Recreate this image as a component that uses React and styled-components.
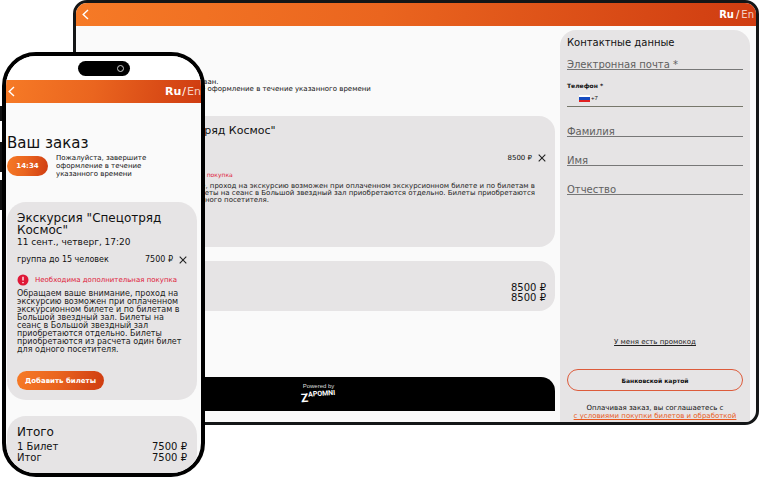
import React from "react";
import styled, { createGlobalStyle } from "styled-components";

const GlobalStyle = createGlobalStyle`
  *, *::before, *::after { box-sizing: border-box; }
  html { background: #fff; }
  body { margin: 0; overflow: hidden; font-family: "DejaVu Sans", "Noto Sans", sans-serif; color: #111; }
  button, input { font-family: inherit; color: inherit; }
  h1, h2, h3, p { margin: 0; font-weight: 400; }
`;

const flame = "linear-gradient(100deg, #f67a26 0%, #ea651f 45%, #cf3c11 100%)";

const Stage = styled.main`
  position: relative;
  padding: 0 1px 53px 73px;
`;

const Tablet = styled.section`
  display: flex;
  flex-direction: column;
  min-height: 425px;
  border: 3px solid #141617;
  border-radius: 14px;
  background: #fafafa;
  overflow: hidden;
`;

const TopBar = styled.header`
  display: flex;
  align-items: center;
  justify-content: space-between;
  flex: none;
  height: 23px;
  padding: 0 ${(p) => (p.$phone ? 0 : 2)}px 0 ${(p) => (p.$phone ? 2 : 6)}px;
  background: ${flame};
  color: #fff;
`;

const IconButton = styled.button`
  display: flex;
  flex: none;
  padding: 0;
  border: 0;
  background: none;
  cursor: pointer;
`;

const Languages = styled.nav`
  display: flex;
  gap: ${(p) => (p.$phone ? 1 : 2)}px;
  font-size: ${(p) => (p.$phone ? 11 : 10)}px;
  line-height: 14px;
`;

const Language = styled.a`
  color: #fff;
  text-decoration: none;
  font-weight: ${(p) => (p.$current ? 700 : 400)};
  opacity: ${(p) => (p.$current ? 1 : 0.75)};
`;

const TabletBody = styled.div`
  display: grid;
  grid-template-columns: minmax(0, 1fr) 190px;
  flex: 1;
  gap: 5px;
  padding: 4px 6px 0 5px;
`;

const OrderColumn = styled.div`
  display: flex;
  flex-direction: column;
  padding-top: 49px;
`;

const Notice = styled.p`
  margin-left: 34px;
  font-size: 7px;
  line-height: 7px;
  white-space: nowrap;
`;

const WideCard = styled.article`
  margin-top: ${(p) => p.$gap}px;
  padding: 8px 9px 0 12px;
  min-height: ${(p) => p.$height}px;
  border-radius: 16px;
  background: #e6e4e5;
`;

const WideTitle = styled.h2`
  font-size: 11px;
  line-height: 14px;
`;

const WidePrice = styled.div`
  display: flex;
  align-items: center;
  justify-content: flex-end;
  gap: 6px;
  margin: 14px 0 5px;
  font-size: 7px;
  line-height: 12px;
`;

const Warning = styled.p`
  display: flex;
  align-items: center;
  gap: 6px;
  font-size: ${(p) => (p.$wide ? 6 : 7)}px;
  line-height: 10px;
  white-space: nowrap;
  color: #df1837;
`;

const WideText = styled.p`
  margin-top: 2px;
  padding-right: 11px;
  font-size: 7px;
  line-height: 7px;
  color: #222;
  text-align: right;
  white-space: pre-line;
`;

const WideTextEnd = styled.span`
  display: block;
  padding-right: 266px;
`;

const Totals = styled.div`
  padding-top: ${(p) => (p.$wide ? 14 : 3)}px;
  font-size: 10px;
  line-height: ${(p) => (p.$wide ? 10 : 11)}px;
`;

const TotalRow = styled.div`
  display: flex;
  justify-content: space-between;
`;

const Powered = styled.footer`
  display: flex;
  flex-direction: column;
  align-items: center;
  margin: 66px 0 10px;
  height: 34px;
  padding: 6px 0 0 1px;
  border-radius: 0 14px 0 0;
  background: #000;
  color: #ddd;
  font: 6px/7px "Liberation Sans", sans-serif;
`;

const Brand = styled.strong`
  display: flex;
  align-items: flex-start;
  color: #fff;
  font: 700 7px/9px Roboto, sans-serif;
  transform: rotate(-4deg);
`;

const BrandInitial = styled.span`
  font-size: 12px;
  line-height: 14px;
`;

const Contacts = styled.form`
  display: flex;
  flex-direction: column;
  padding: 7px 7px 0;
  border-radius: 16px 16px 0 0;
  background: #e6e4e5;
`;

const ContactsTitle = styled.h2`
  font-size: 10px;
  line-height: 12px;
`;

const Field = styled.input`
  width: 100%;
  height: 14px;
  margin-top: ${(p) => p.$gap}px;
  padding: 4px 0 0;
  border: 0;
  border-bottom: 1px solid #777;
  border-radius: 0;
  background: none;
  outline: 0;
  font-size: 10px;
  line-height: 10px;
  &::placeholder { color: #606060; opacity: 1; }
`;

const PhoneLabel = styled.label`
  margin-top: 12px;
  font-size: 6px;
  font-weight: 700;
  line-height: 8px;
`;

const PhoneRow = styled.div`
  display: flex;
  align-items: center;
  gap: 1px;
  height: 17px;
  padding-left: 12px;
  border-bottom: 1px solid #77776b;
`;

const PhoneInput = styled.input`
  flex: 1;
  min-width: 0;
  padding: 0;
  border: 0;
  outline: 0;
  background: none;
  font: 6px/8px "Liberation Sans", sans-serif;
`;

const Promo = styled.a`
  align-self: center;
  margin-top: 142px;
  color: #222;
  font-size: 7px;
  line-height: 10px;
`;

const PayButton = styled.button`
  height: 22px;
  margin-top: 22px;
  padding: 0;
  border: 1px solid #dd5b3b;
  border-radius: 11px;
  background: none;
  font-size: 6px;
  font-weight: 700;
  cursor: pointer;
`;

const Terms = styled.p`
  margin-top: 13px;
  font-size: 7px;
  line-height: 8px;
  text-align: center;
  white-space: nowrap;
`;

const TermsLink = styled.a`
  display: block;
  color: #e85a20;
`;

const Device = styled.div`
  position: absolute;
  top: 52px;
  left: 0;
  width: 206px;
  padding: 0 1px 0 2px;
`;

const SideKey = styled.span`
  position: absolute;
  z-index: -1;
  top: ${(p) => p.$top}px;
  ${(p) => (p.$right ? "right: 0" : "left: 0")};
  width: 5px;
  height: ${(p) => p.$length}px;
  background: #111;
`;

const Phone = styled.section`
  display: flex;
  flex-direction: column;
  min-height: 425px;
  border: 4px solid #000;
  border-radius: 34px;
  background: #fafafa;
  overflow: hidden;
`;

const StatusBar = styled.div`
  display: flex;
  justify-content: center;
  flex: none;
  height: 24px;
  padding-top: 5px;
  background: #fff;
`;

const Island = styled.div`
  display: flex;
  align-items: center;
  justify-content: flex-end;
  width: 52px;
  height: 15px;
  padding-right: 6px;
  border-radius: 8px;
  background: #000;
`;

const Lens = styled.span`
  width: 7px;
  height: 7px;
  border: 1px solid #ccc;
  border-radius: 50%;
`;

const PhoneBody = styled.div`
  display: flex;
  flex-direction: column;
  padding: 31px 4px 0 1px;
`;

const OrderTitle = styled.h1`
  font-size: 15px;
  line-height: 18px;
`;

const TimerRow = styled.div`
  display: flex;
  align-items: center;
  gap: 8px;
  margin-top: 2px;
  font-size: 7px;
  line-height: 8px;
`;

const Timer = styled.time`
  width: 41px;
  border-radius: 10px;
  background: ${flame};
  color: #fff;
  font-weight: 700;
  line-height: 20px;
  text-align: center;
`;

const Hint = styled.p`
  flex: 1;
  padding-right: 36px;
`;

const Card = styled.article`
  margin-top: ${(p) => p.$gap}px;
  padding: 10px;
  border-radius: 19px;
  background: #e6e4e5;
`;

const CardTitle = styled.h2`
  font-size: 12px;
  line-height: 12px;
`;

const CardDate = styled.p`
  font-size: 9px;
  line-height: 13px;
`;

const TicketRow = styled.div`
  display: flex;
  align-items: center;
  gap: 6px;
  margin: 5px 0 8px;
  font-size: 8px;
  line-height: 12px;
`;

const TicketPrice = styled.span`
  margin-left: auto;
`;

const CardText = styled.p`
  margin-top: 4px;
  font-size: 8px;
  line-height: 8px;
  color: #222;
  white-space: pre-line;
`;

const AddButton = styled.button`
  display: block;
  width: 87px;
  height: 19px;
  margin-top: 17px;
  padding: 0;
  border: 0;
  border-radius: 10px;
  background: ${flame};
  color: #fff;
  font-size: 7px;
  font-weight: 700;
  white-space: nowrap;
  cursor: pointer;
`;

const description = `Обращаем ваше внимание, проход на
экскурсию возможен при оплаченном
экскурсионном билете и по билетам в
Большой звездный зал. Билеты на
сеанс в Большой звездный зал
приобретаются отдельно. Билеты
приобретаются из расчета один билет
для одного посетителя.`;

function Chevron() {
  return (
    <svg width="7" height="11" viewBox="0 0 7 11" fill="none" stroke="#fff" strokeWidth="1.4">
      <path d="M6 1 1.2 5.5 6 10" />
    </svg>
  );
}

function Cross() {
  return (
    <svg width="8" height="8" viewBox="0 0 8 8" stroke="#222" strokeWidth="1.1">
      <path d="M.7.7l6.6 6.6M7.3.7.7 7.3" />
    </svg>
  );
}

function Alert() {
  return (
    <svg width="12" height="12" viewBox="0 0 12 12">
      <circle cx="6" cy="6" r="5.5" fill="#df1837" />
      <path d="M6 2.8v3.8M6 8v1.3" stroke="#fff" strokeWidth="1.3" />
    </svg>
  );
}

function Flag() {
  return (
    <svg width="11" height="7" viewBox="0 0 11 7">
      <path fill="#fff" d="M0 0h11v2H0z" />
      <path fill="#164cc0" d="M0 2h11v3H0z" />
      <path fill="#e02020" d="M0 5h11v2H0z" />
    </svg>
  );
}

function Header({ phone }) {
  return (
    <TopBar $phone={phone}>
      <IconButton aria-label="Назад"><Chevron /></IconButton>
      <Languages $phone={phone}>
        <Language href="#ru" $current>Ru</Language>
        <span>/</span>
        <Language href="#en">En</Language>
      </Languages>
    </TopBar>
  );
}

function TabletView() {
  return (
    <Tablet>
      <Header />
      <TabletBody>
        <OrderColumn>
          <Notice>Ваш заказ — забронирован.</Notice>
          <Notice>Пожалуйста, завершите оформление в течение указанного времени</Notice>
          <WideCard $gap={23} $height={131}>
            <WideTitle>Экскурсия "Спецотряд Космос"</WideTitle>
            <WidePrice>
              8500 ₽ <IconButton type="button" aria-label="Удалить билет"><Cross /></IconButton>
            </WidePrice>
            <Warning $wide><Alert />Необходима дополнительная покупка</Warning>
            <WideText>
              внимание, проход на экскурсию возможен при оплаченном экскурсионном билете и по билетам в{"\n"}
              Билеты на сеанс в Большой звездный зал приобретаются отдельно. Билеты приобретаются
              <WideTextEnd>одного посетителя.</WideTextEnd>
            </WideText>
          </WideCard>
          <WideCard $gap={14} $height={50}>
            <Totals $wide>
              <TotalRow><span>1 Билет</span><span>8500 ₽</span></TotalRow>
              <TotalRow><span>Итог</span><span>8500 ₽</span></TotalRow>
            </Totals>
          </WideCard>
          <Powered>
            Powered by
            <Brand><BrandInitial>Z</BrandInitial>APOMNI</Brand>
          </Powered>
        </OrderColumn>
        <Contacts>
          <ContactsTitle>Контактные данные</ContactsTitle>
          <Field $gap={7} type="email" aria-label="Электронная почта" placeholder="Электронная почта *" />
          <PhoneLabel htmlFor="tel">Телефон *</PhoneLabel>
          <PhoneRow><Flag /><PhoneInput id="tel" type="tel" defaultValue="+7" /></PhoneRow>
          <Field $gap={16} aria-label="Фамилия" placeholder="Фамилия" />
          <Field $gap={15} aria-label="Имя" placeholder="Имя" />
          <Field $gap={15} aria-label="Отчество" placeholder="Отчество" />
          <Promo href="#promo">У меня есть промокод</Promo>
          <PayButton type="button">Банковской картой</PayButton>
          <Terms>
            Оплачивая заказ, вы соглашаетесь с
            <TermsLink href="#terms">с условиями покупки билетов и обработкой</TermsLink>
          </Terms>
        </Contacts>
      </TabletBody>
    </Tablet>
  );
}

function PhoneView() {
  return (
    <Device>
      <SideKey $top={54} $length={15} />
      <SideKey $top={90} $length={30} />
      <SideKey $top={128} $length={30} />
      <SideKey $top={90} $length={46} $right />
      <Phone>
        <StatusBar><Island><Lens /></Island></StatusBar>
        <Header phone />
        <PhoneBody>
          <OrderTitle>Ваш заказ</OrderTitle>
          <TimerRow>
            <Timer>14:34</Timer>
            <Hint>Пожалуйста, завершите оформление в течение указанного времени</Hint>
          </TimerRow>
          <Card $gap={24}>
            <CardTitle>Экскурсия "Спецотряд Космос"</CardTitle>
            <CardDate>11 сент., четверг, 17:20</CardDate>
            <TicketRow>
              <span>группа до 15 человек</span>
              <TicketPrice>7500 ₽</TicketPrice>
              <IconButton type="button" aria-label="Удалить билет"><Cross /></IconButton>
            </TicketRow>
            <Warning><Alert />Необходима дополнительная покупка</Warning>
            <CardText>{description}</CardText>
            <AddButton type="button">Добавить билеты</AddButton>
          </Card>
          <Card $gap={16}>
            <CardTitle>Итого</CardTitle>
            <Totals>
              <TotalRow><span>1 Билет</span><span>7500 ₽</span></TotalRow>
              <TotalRow><span>Итог</span><span>7500 ₽</span></TotalRow>
            </Totals>
          </Card>
        </PhoneBody>
      </Phone>
    </Device>
  );
}

export default function App() {
  return (
    <>
      <GlobalStyle />
      <Stage>
        <TabletView />
        <PhoneView />
      </Stage>
    </>
  );
}
